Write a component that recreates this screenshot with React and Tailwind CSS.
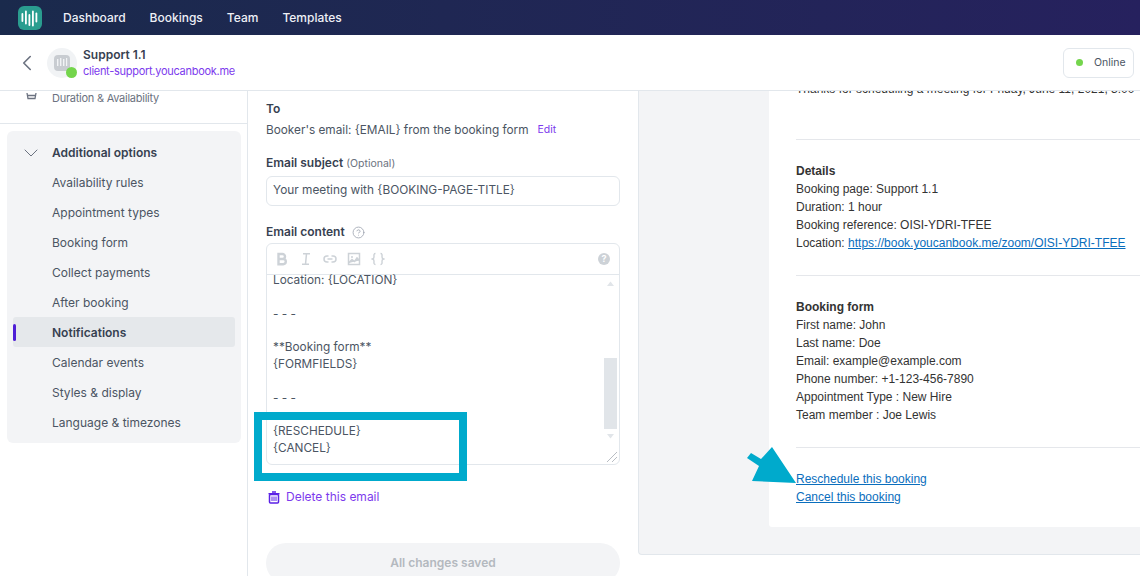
import React from "react";
import { ChevronLeft, ChevronDown, CircleHelp } from "lucide-react";

const items = ["Availability rules", "Appointment types", "Booking form", "Collect payments", "After booking", "Notifications", "Calendar events", "Styles & display", "Language & timezones"];

function Logo() {
  return (
    <svg width="24" height="24" viewBox="0 0 24 24" className="block">
      <rect width="24" height="24" rx="6" fill="#2a9d8f" />
      <g fill="#fff">
        <rect x="3.5" y="7" width="1.8" height="9" rx=".9" />
        <rect x="7" y="4.5" width="1.8" height="14" rx=".9" />
        <rect x="10.5" y="8" width="1.8" height="12" rx=".9" />
        <rect x="14" y="4.5" width="1.8" height="16" rx=".9" />
        <rect x="17.5" y="6.5" width="1.8" height="10" rx=".9" />
      </g>
    </svg>
  );
}

function AvatarMark() {
  return (
    <svg width="16" height="16" viewBox="0 0 16 16" className="block">
      <rect width="16" height="16" rx="4" fill="#c8ccd1" />
      <g fill="#f1f3f5">
        <rect x="3" y="4" width="1.4" height="7" />
        <rect x="6" y="3" width="1.4" height="8" />
        <rect x="9" y="4" width="1.4" height="7" />
        <rect x="12" y="3" width="1.2" height="8" />
      </g>
    </svg>
  );
}

function EditorIcons() {
  const c = "#cdd2d7";
  return (
    <div className="flex items-center pl-[8px] gap-[10px]">
      <svg width="14" height="14" viewBox="0 0 14 14" fill="none" stroke={c} strokeWidth="2.4"><path d="M3.5 2h4a2.5 2.5 0 0 1 0 5h-4zM3.5 7h4.7a2.6 2.6 0 0 1 0 5.2H3.5z" /></svg>
      <svg width="14" height="14" viewBox="0 0 14 14" fill="none" stroke={c} strokeWidth="1.5"><path d="M4 1.8h7M3 12.2h7M7.5 1.8l-1 10.4" /></svg>
      <svg width="14" height="14" viewBox="0 0 14 14" fill="none" stroke={c} strokeWidth="1.5"><path d="M5.5 4H4a3 3 0 0 0 0 6h1.5M8.5 4H10a3 3 0 0 1 0 6H8.500M4.500 7h5" /></svg>
      <svg width="14" height="14" viewBox="0 0 14 14" fill="none" stroke={c} strokeWidth="1.5"><rect x="1.500" y="1.500" width="11" height="11" /><path d="M1.500 11l3.500-3.500 2.500 2 2.500-3.500 2.500 2.500" fill={c} /><circle cx="5" cy="5" r="1" fill={c} stroke="none" /></svg>
      <svg width="14" height="14" viewBox="0 0 14 14" fill="none" stroke={c} strokeWidth="1.4"><path d="M4.500 1.500c-2 0-1.500 2-1.500 3.500S1.500 7 1.500 7 3 7.500 3 9s-.5 3.500 1.500 3.500M9.500 1.500c2 0 1.500 2 1.500 3.500S12.500 7 12.500 7 11 7.500 11 9s.5 3.500-1.500 3.500" /></svg>
    </div>
  );
}

function TrashIcon() {
  return (
    <svg width="12" height="13" viewBox="0 0 12 13" className="block" fill="none" stroke="#5b21e6">
      <path d="M4 1h4M.5 2.700h11" strokeWidth="1.500" />
      <rect x="1.500" y="3.500" width="9" height="8.500" rx="1" strokeWidth="1.500" />
      <path d="M4 5.500v4.500M6 5.500v4.500M8 5.500v4.500" strokeWidth="1" />
    </svg>
  );
}

export default function App() {
  return (
    <div className="w-[1140px] h-[576px] overflow-hidden relative bg-white font-['Inter',sans-serif] text-[12px] text-[#4b5563]">
      <nav className="h-[35px] bg-gradient-to-r from-[#1a2a4c] to-[#26215e] flex items-center pl-[18px]">
        <Logo />
        <div className="flex gap-6 ml-[21px] text-[12px] font-medium text-[#eef0f6]">
          <span>Dashboard</span><span>Bookings</span><span>Team</span><span>Templates</span>
        </div>
      </nav>
      <header className="h-[56px] bg-white border-b border-[#e2e7ec] flex items-center relative z-10">
        <ChevronLeft className="w-[26px] h-[26px] ml-[14px] text-[#6b7280]" strokeWidth={1.500} />
        <div className="relative w-[30px] h-[30px] rounded-full bg-[#f1f3f5] ml-[7px] flex items-center justify-center">
          <AvatarMark />
          <span className="absolute right-[0px] bottom-[0px] w-[11px] h-[11px] rounded-full bg-[#74d54c]" />
        </div>
        <div className="ml-[6px] leading-[16px]">
          <div className="text-[12px] font-semibold text-[#374151]">Support 1.1</div>
          <div className="text-[11px] tracking-[-0.28px] text-[#7c3aed]">client-support.youcanbook.me</div>
        </div>
        <div className="ml-auto mr-[6px] w-[71px] h-[30px] border border-[#e2e7ec] rounded-[6px] flex items-center pl-[12px] gap-[11px] text-[10.500px] text-[#4b5563]">
          <span className="w-[7px] h-[7px] rounded-full bg-[#74d54c]" /> Online
        </div>
      </header>
      <div className="flex h-[485px] overflow-hidden">
        <aside className="w-[248px] shrink-0 border-r border-[#e2e7ec] overflow-hidden">
          <div className="h-[33px] border-b border-[#e2e7ec] flex items-start pl-[26px]">
            <svg width="11" height="8" viewBox="0 0 11 8" className="mt-[1px]" fill="none" stroke="#6b7280" strokeWidth="1.300"><path d="M1 1l1 5.500h7l1-5.500M1.500 3.500h8" /></svg>
            <span className="ml-[15px] text-[11px] tracking-[-0.25px] text-[#6b7280] leading-[14px]">Duration &amp; Availability</span>
          </div>
          <div className="mx-[7px] mt-[7px] w-[234px] h-[312px] bg-[#f3f4f6] rounded-[6px] pt-[6px] px-[6px]">
            <div className="h-[30px] pt-[1px] flex items-center font-semibold text-[#374151] pl-[6px]">
              <ChevronDown className="w-6 h-6 mr-[9px] text-[#6b7280]" strokeWidth={1} />
              Additional options
            </div>
            {items.map((t) => (
              <div key={t} className={`h-[30px] pt-[1px] flex items-center pl-[39px] relative rounded-[3px] ${t === "Notifications" ? "bg-[#e5e8eb] font-semibold text-[#374151]" : ""}`}>
                {t === "Notifications" && <span className="absolute left-0 top-[7px] w-[3px] h-[17px] bg-[#4f1fd6] rounded-sm" />}
                {t}
              </div>
            ))}
          </div>
        </aside>
        <main className="w-[390px] shrink-0 pl-[18px] pr-[18px] pt-[10px] relative">
          <div className="font-semibold text-[#374151] leading-[16px]">To</div>
          <div className="mt-[3px] flex items-center leading-[20px] text-[11.800px]">
            Booker's email: {"{EMAIL}"} from the booking form
            <span className="ml-[9px] text-[10.500px] text-[#7c3aed]">Edit</span>
          </div>
          <div className="mt-[15px] leading-[16px] font-semibold text-[#374151]">Email subject <span className="font-normal text-[10.500px] text-[#6b7280]">(Optional)</span></div>
          <div className="mt-[4px] h-[30px] w-[354px] border border-[#e2e7ec] rounded-[6px] flex items-center pl-[6px] text-[11.850px]">Your meeting with {"{BOOKING-PAGE-TITLE}"}</div>
          <div className="mt-[18px] flex items-center leading-[16px] font-semibold text-[#374151]">Email content <CircleHelp className="w-[13px] h-[13px] ml-[7px] text-[#9ca3af]" strokeWidth={1.500} /></div>
          <div className="mt-[3px] w-[354px] h-[222px] border border-[#e2e7ec] rounded-[6px] relative overflow-hidden">
            <div className="h-[31px] border-b border-[#e2e7ec] flex items-center justify-between">
              <EditorIcons />
              <span className="mr-[9px] w-[12px] h-[12px] rounded-full bg-[#cdd2d7] text-white text-[9px] font-bold flex items-center justify-center">?</span>
            </div>
            <div className="pl-[6px] text-[11.800px] leading-[16.800px] -mt-[3px]">
              <div>Location: {"{LOCATION}"}</div>
              <div className="h-[16.800px]" />
              <div>- - -</div>
              <div className="h-[16.800px]" />
              <div>**Booking form**</div>
              <div>{"{FORMFIELDS}"}</div>
              <div className="h-[16.800px]" />
              <div>- - -</div>
              <div className="h-[16.800px]" />
              <div>{"{RESCHEDULE}"}</div>
              <div>{"{CANCEL}"}</div>
            </div>
            <svg className="absolute right-[2px] top-[36px]" width="13" height="8" viewBox="0 0 13 8"><path d="M6.500 1.500L10 6H3z" fill="#e1e5e9" /></svg>
            <div className="absolute right-[2px] top-[114px] w-[13px] h-[71px] bg-[#e1e5e9]" />
            <svg className="absolute right-[2px] top-[188px]" width="13" height="8" viewBox="0 0 13 8"><path d="M6.500 6.500L10 2H3z" fill="#e1e5e9" /></svg>
            <svg className="absolute right-[1px] bottom-[1px]" width="12" height="12" viewBox="0 0 12 12" stroke="#b8bdc3" strokeWidth="1"><path d="M1 11L11 1M6 11L11 6" /></svg>
          </div>
          <div className="mt-[24px] ml-[2px] h-[16px] flex items-center gap-[6px] text-[12px] text-[#7c3aed]">
            <TrashIcon /> Delete this email
          </div>
          <div className="mt-[38px] w-[354px] h-[40px] rounded-[20px] bg-[#f3f4f6] flex items-center justify-center text-[12px] font-semibold text-[#b4b9bf]">All changes saved</div>
          <div className="absolute left-[6px] top-[321px] w-[213px] h-[69px] border-[8px] border-[#00aacc]" />
        </main>
        <section className="flex-1 relative">
          <div className="h-[464px] bg-[#f3f4f6] border-l border-b border-[#e2e7ec] rounded-bl-[4px] pl-[130px]">
            <div className="h-[436px] bg-white rounded-bl-[3px] pl-[27px] font-['Liberation_Sans',sans-serif] text-[12px] leading-[18px] text-[#333] overflow-hidden">
              <div className="-mt-[11px] whitespace-nowrap">Thanks for scheduling a meeting for Friday, June 11, 2021, 3:00</div>
              <div className="border-t border-[#e5e7eb] mt-[41px] pt-[22px]">
                <div className="font-bold">Details</div>
                <div>Booking page: Support 1.1</div>
                <div>Duration: 1 hour</div>
                <div>Booking reference: OISI-YDRI-TFEE</div>
                <div>Location: <span className="text-[#0a6ebd] underline">https://book.youcanbook.me/zoom/OISI-YDRI-TFEE</span></div>
              </div>
              <div className="border-t border-[#e5e7eb] mt-[23px] pt-[22px]">
                <div className="font-bold">Booking form</div>
                <div>First name: John</div>
                <div>Last name: Doe</div>
                <div>Email: example@example.com</div>
                <div>Phone number: +1-123-456-7890</div>
                <div>Appointment Type : New Hire</div>
                <div>Team member : Joe Lewis</div>
              </div>
              <div className="border-t border-[#e5e7eb] mt-[23px] pt-[22px] text-[#0a6ebd] underline">
                <div>Reschedule this booking</div>
                <div>Cancel this booking</div>
              </div>
            </div>
          </div>
          <svg className="absolute left-[108px] top-[354px]" width="52" height="40" viewBox="0 0 52 40">
            <path d="M1 13L5 8L15 14L26 2L50 38L6 36L13 21Z" fill="#00aacc" />
          </svg>
        </section>
      </div>
    </div>
  );
}
